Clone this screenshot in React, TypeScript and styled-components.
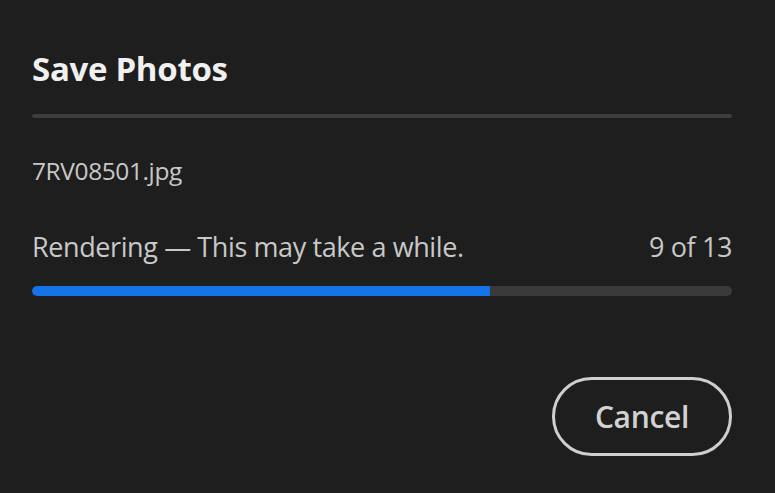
import styled, { createGlobalStyle } from 'styled-components';

const GlobalStyle = createGlobalStyle`
  html, body {
    margin: 0;
    padding: 0;
    background: #1e1e1e;
  }
  body {
    font-family: 'Open Sans', 'Noto Sans', sans-serif;
  }
`;

const Dialog = styled.div`
  width: 775px;
  height: 493px;
  box-sizing: border-box;
  padding: 46px 43px 0 32px;
  background: #1e1e1e;
  display: flex;
  flex-direction: column;
`;

const Title = styled.h1`
  margin: 0;
  font-size: 33px;
  font-weight: 700;
  line-height: 46px;
  color: #f0f0f0;
  letter-spacing: -0.3px;
`;

const Divider = styled.div`
  margin-top: 22px;
  height: 4px;
  border-radius: 2px;
  background: #3e3e3e;
`;

const FileName = styled.div`
  margin-top: 38px;
  font-size: 24.5px;
  line-height: 30px;
  color: #c8c8c8;
  letter-spacing: -0.4px;
`;

const StatusRow = styled.div`
  margin-top: 44px;
  display: flex;
  justify-content: space-between;
  align-items: baseline;
  font-size: 27px;
  line-height: 34px;
  color: #c8c8c8;
  letter-spacing: -0.4px;
`;

const Track = styled.div`
  margin-top: 22px;
  height: 10px;
  border-radius: 5px;
  background: #3a3a3a;
  overflow: hidden;
`;

const Fill = styled.div`
  height: 100%;
  background: #1473e6;
  border-radius: 5px 0 0 5px;
`;

const Footer = styled.div`
  margin-top: 81px;
  display: flex;
  justify-content: flex-end;
`;

const CancelButton = styled.button`
  width: 180px;
  height: 79px;
  box-sizing: border-box;
  border: 3px solid #cfcfcf;
  border-radius: 40px;
  background: transparent;
  color: #d2d2d2;
  font-family: 'Open Sans', 'Noto Sans', sans-serif;
  font-size: 30px;
  font-weight: 600;
  letter-spacing: -0.3px;
  cursor: pointer;
`;

export default function App() {
  const done = 9;
  const total = 13;
  // fill ends at 490 of a 700px track in the reference
  const pct = 65.4;
  return (
    <>
      <GlobalStyle />
      <Dialog>
        <Title>Save Photos</Title>
        <Divider />
        <FileName>7RV08501.jpg</FileName>
        <StatusRow>
          <span>Rendering — This may take a while.</span>
          <span>
            {done} of {total}
          </span>
        </StatusRow>
        <Track>
          <Fill style={{ width: `${pct}%` }} />
        </Track>
        <Footer>
          <CancelButton>Cancel</CancelButton>
        </Footer>
      </Dialog>
    </>
  );
}
